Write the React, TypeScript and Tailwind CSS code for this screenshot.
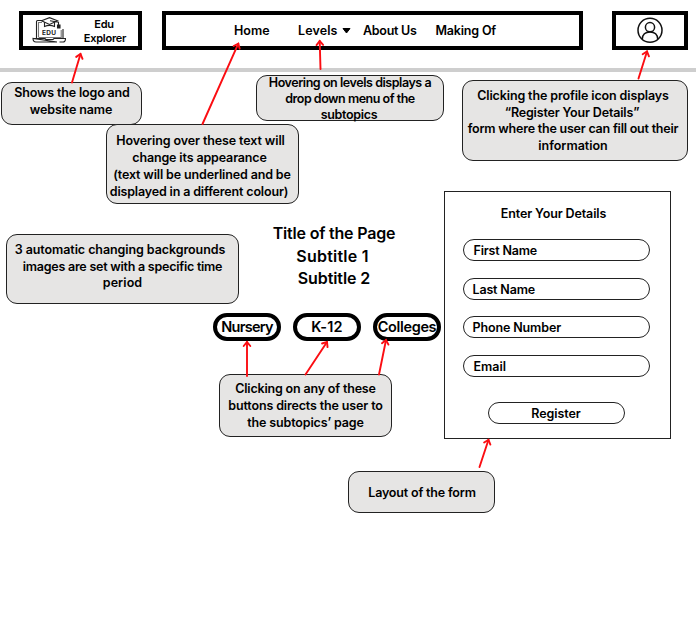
import { useLayoutEffect, useRef, useState } from "react";
import type { ReactNode } from "react";

/** One line of text whose letter spacing is adjusted so that it fills `width` pixels. */
function Line({ text, width, className = "" }: { text: string; width: number; className?: string }) {
  const ref = useRef<HTMLSpanElement>(null);
  const [spacing, setSpacing] = useState(0);

  useLayoutEffect(() => {
    const el = ref.current;
    if (!el) return;
    el.style.letterSpacing = "0px";
    const natural = el.getBoundingClientRect().width;
    const next = (width + 0.5 - natural) / text.length;
    el.style.letterSpacing = `${next}px`;
    setSpacing(next);
  }, [text, width]);

  return (
    <span className={`block w-max whitespace-nowrap ${className}`}>
      <span ref={ref} style={{ letterSpacing: `${spacing}px` }}>
        {text}
      </span>
    </span>
  );
}

function Callout({ className, children }: { className: string; children: ReactNode }) {
  return (
    <div
      className={`absolute flex flex-col items-center rounded-[11px] border border-[#222] bg-[#e6e5e4] ${className}`}
    >
      {children}
    </div>
  );
}

function Arrow({ x1, y1, x2, y2 }: { x1: number; y1: number; x2: number; y2: number }) {
  const angle = (Math.atan2(y2 - y1, x2 - x1) * 180) / Math.PI;
  return (
    <g>
      <line x1={x1} y1={y1} x2={x2} y2={y2} />
      <path d="M-4 -3.300 L0 0 L-4 3.300" transform={`translate(${x2} ${y2}) rotate(${angle})`} />
    </g>
  );
}

function LogoIcon() {
  return (
    <svg className="ml-[9px] h-[27px] w-[34px]" viewBox="0 0 34 27" fill="none" stroke="#222" strokeWidth="1.1">
      <path d="M10 3.500H5.500Q4.500 3.500 4.500 4.500V21M24 3.500H25M31 12V21" />
      <path d="M6.500 20V5.500H10M29.200 13V20.500H6.500" stroke="#777" />
      <path d="M1 21.500H13L14 22.500H21L22 21.500H33.500Q33.500 25 31 25H27.500M25 25H4Q1 25 1 21.500Z" />
      <path d="M12.500 5V9.500Q17.500 7.300 22.500 9.500V5" fill="white" />
      <path d="M9.500 3.800L17.500 0.700L25.500 3.800L17.500 7.500Z" fill="white" />
      <path d="M18 3.800L26.500 5.300V8.500" />
      <path d="M25.500 8H28V11H25.500Z" fill="#222" />
      <text
        x="10"
        y="17.5"
        textLength="14"
        fill="#222"
        stroke="none"
        className="font-['Inter',sans-serif] text-[6.5px] font-bold"
      >
        EDU
      </text>
    </svg>
  );
}

function ProfileIcon() {
  return (
    <svg className="size-[27px]" viewBox="0 0 27 27" fill="none" stroke="#111" strokeWidth="1.5">
      <circle cx="13" cy="13.2" r="12" />
      <circle cx="13" cy="10.200" r="4.6" />
      <path d="M5.300 22C5.500 17.500 8.300 14.900 13 14.900S20.500 17.500 20.700 22" />
    </svg>
  );
}

const fields = [
  { label: "First Name", width: 63, gap: "mt-[17px]", pad: "pl-[10px]" },
  { label: "Last Name", width: 62, gap: "mt-[17px]", pad: "pl-[9px]" },
  { label: "Phone Number", width: 88, gap: "mt-[16px]", pad: "pl-[9px]" },
  { label: "Email", width: 32, gap: "mt-[17px]", pad: "pl-[10px]" },
];

const levels = [
  { label: "Nursery", width: 51 },
  { label: "K-12", width: 31 },
  { label: "Colleges", width: 58 },
];

export default function App() {
  return (
    <div className="relative h-[619px] w-[696px] overflow-hidden bg-white font-['Inter',sans-serif] text-[12.5px] leading-[17px] font-semibold text-black">
      <header className="flex h-[72px] items-start border-b-4 border-[#cecece] pt-[11px] pl-[19px]">
        <div className="flex h-[39px] w-[123px] items-center border-4 border-black">
          <LogoIcon />
          <div className="ml-[4px] flex flex-1 flex-col items-center text-[11px] leading-[14px]">
            <Line text="Edu" width={19} />
            <Line text="Explorer" width={42} className="ml-[2px]" />
          </div>
        </div>
        <nav className="ml-5 flex h-[39px] w-[421px] items-center border-4 border-black pl-[68px]">
          <Line text="Home" width={35} />
          <Line text="Levels" width={39} className="ml-[28.500px]" />
          <svg className="ml-[4px] h-[6px] w-[9px]" viewBox="0 0 9 6">
            <path d="M1 0.500H8L4.500 5Z" fill="#000" stroke="#000" strokeLinejoin="round" />
          </svg>
          <Line text="About Us" width={53} className="ml-[12.500px]" />
          <Line text="Making Of" width={60} className="ml-[19px]" />
        </nav>
        <div className="ml-[29px] flex h-[39px] w-[76px] items-center justify-center border-4 border-black">
          <ProfileIcon />
        </div>
      </header>

      <main className="flex items-start pt-[119px] pl-[213px]">
        <section className="w-[227px] shrink-0 pt-[31px]">
          <div className="flex w-[242px] flex-col items-center text-[16px] leading-[22.500px]">
            <Line text="Title of the Page" width={122} />
            <Line text="Subtitle 1" width={72} className="-ml-[3px]" />
            <Line text="Subtitle 2" width={72} />
          </div>
          <div className="mt-[23px] flex gap-3 text-[14.5px]">
            {levels.map((level) => (
              <div
                key={level.label}
                className="flex h-[28px] w-[68px] shrink-0 items-center justify-center rounded-full border-4 border-black"
              >
                <Line text={level.label} width={level.width} />
              </div>
            ))}
          </div>
        </section>

        <section className="ml-1 flex h-[248px] w-[227px] flex-col items-center border border-[#222] pt-[13px]">
          <Line text="Enter Your Details" width={105} className="-ml-2" />
          {fields.map((field) => (
            <div
              key={field.label}
              className={`mr-[3px] flex h-[22px] w-[187px] shrink-0 items-center rounded-full border border-[#222] ${field.pad} ${field.gap}`}
            >
              <Line text={field.label} width={field.width} />
            </div>
          ))}
          <div className="mt-[25px] mr-[3px] flex h-[22px] w-[137px] shrink-0 items-center justify-center rounded-full border border-[#222]">
            <Line text="Register" width={49} />
          </div>
        </section>
      </main>

      <Callout className="top-[82px] left-[1px] h-[43px] w-[141px] pt-px">
        <Line text="Shows the logo and" width={115} className="ml-px" />
        <Line text="website name" width={82} className="-ml-px" />
      </Callout>
      <Callout className="top-[124px] left-[106px] h-[80px] w-[193px] pt-[7px]">
        <Line text="Hovering over these text will" width={168} className="-ml-1" />
        <Line text="change its appearance" width={134} className="-ml-[6px]" />
        <Line text="(text will be underlined and be" width={177} className="-ml-px" />
        <Line text="displayed in a different colour)" width={178} className="-ml-[7px]" />
      </Callout>
      <Callout className="top-[75px] left-[256px] h-[46px] w-[188px] justify-center pt-px leading-[16px]">
        <Line text="Hovering on levels displays a" width={162} />
        <Line text="drop down menu of the" width={129} />
        <Line text="subtopics" width={56} className="-ml-[2px]" />
      </Callout>
      <Callout className="top-[80px] left-[462px] h-[81px] w-[226px] pt-[7px] pr-1 leading-[16.700px]">
        <Line text="Clicking the profile icon displays" width={191} />
        <Line text="“Register Your Details”" width={134} className="-ml-[2px]" />
        <Line text="form where the user can fill out their" width={210} />
        <Line text="information" width={69} />
      </Callout>
      <Callout className="top-[234px] left-[6px] h-[70px] w-[233px] pt-[7px] leading-[16.700px]">
        <Line text="3 automatic changing backgrounds" width={210} className="-ml-[5px]" />
        <Line text="images are set with a specific time" width={199} />
        <Line text="period" width={39} />
      </Callout>
      <Callout className="top-[374px] left-[219px] h-[63px] w-[173px] pt-[5px]">
        <Line text="Clicking on any of these" width={140} />
        <Line text="buttons directs the user to" width={154} />
        <Line text="the subtopics’ page" width={116} />
      </Callout>
      <Callout className="top-[471px] left-[348px] h-[42px] w-[147px] justify-center">
        <Line text="Layout of the form" width={107} className="ml-px" />
      </Callout>

      <svg
        className="pointer-events-none absolute inset-0 h-[619px] w-[696px]"
        viewBox="0 0 696 619"
        fill="none"
        stroke="#fb0d12"
        strokeWidth="1.9"
        strokeLinecap="round"
      >
        <Arrow x1={72} y1={82.5} x2={80.5} y2={54} />
        <Arrow x1={202.5} y1={124} x2={238.3} y2={43.7} />
        <Arrow x1={320.5} y1={69} x2={319.7} y2={41} />
        <Arrow x1={638.5} y1={78.5} x2={647} y2={51.5} />
        <Arrow x1={247} y1={376} x2={247} y2={342} />
        <Arrow x1={305.5} y1={374.5} x2={327} y2={342} />
        <Arrow x1={379} y1={374.5} x2={386} y2={340} />
        <Arrow x1={479.5} y1={467} x2={488.5} y2={439.8} />
      </svg>
    </div>
  );
}
